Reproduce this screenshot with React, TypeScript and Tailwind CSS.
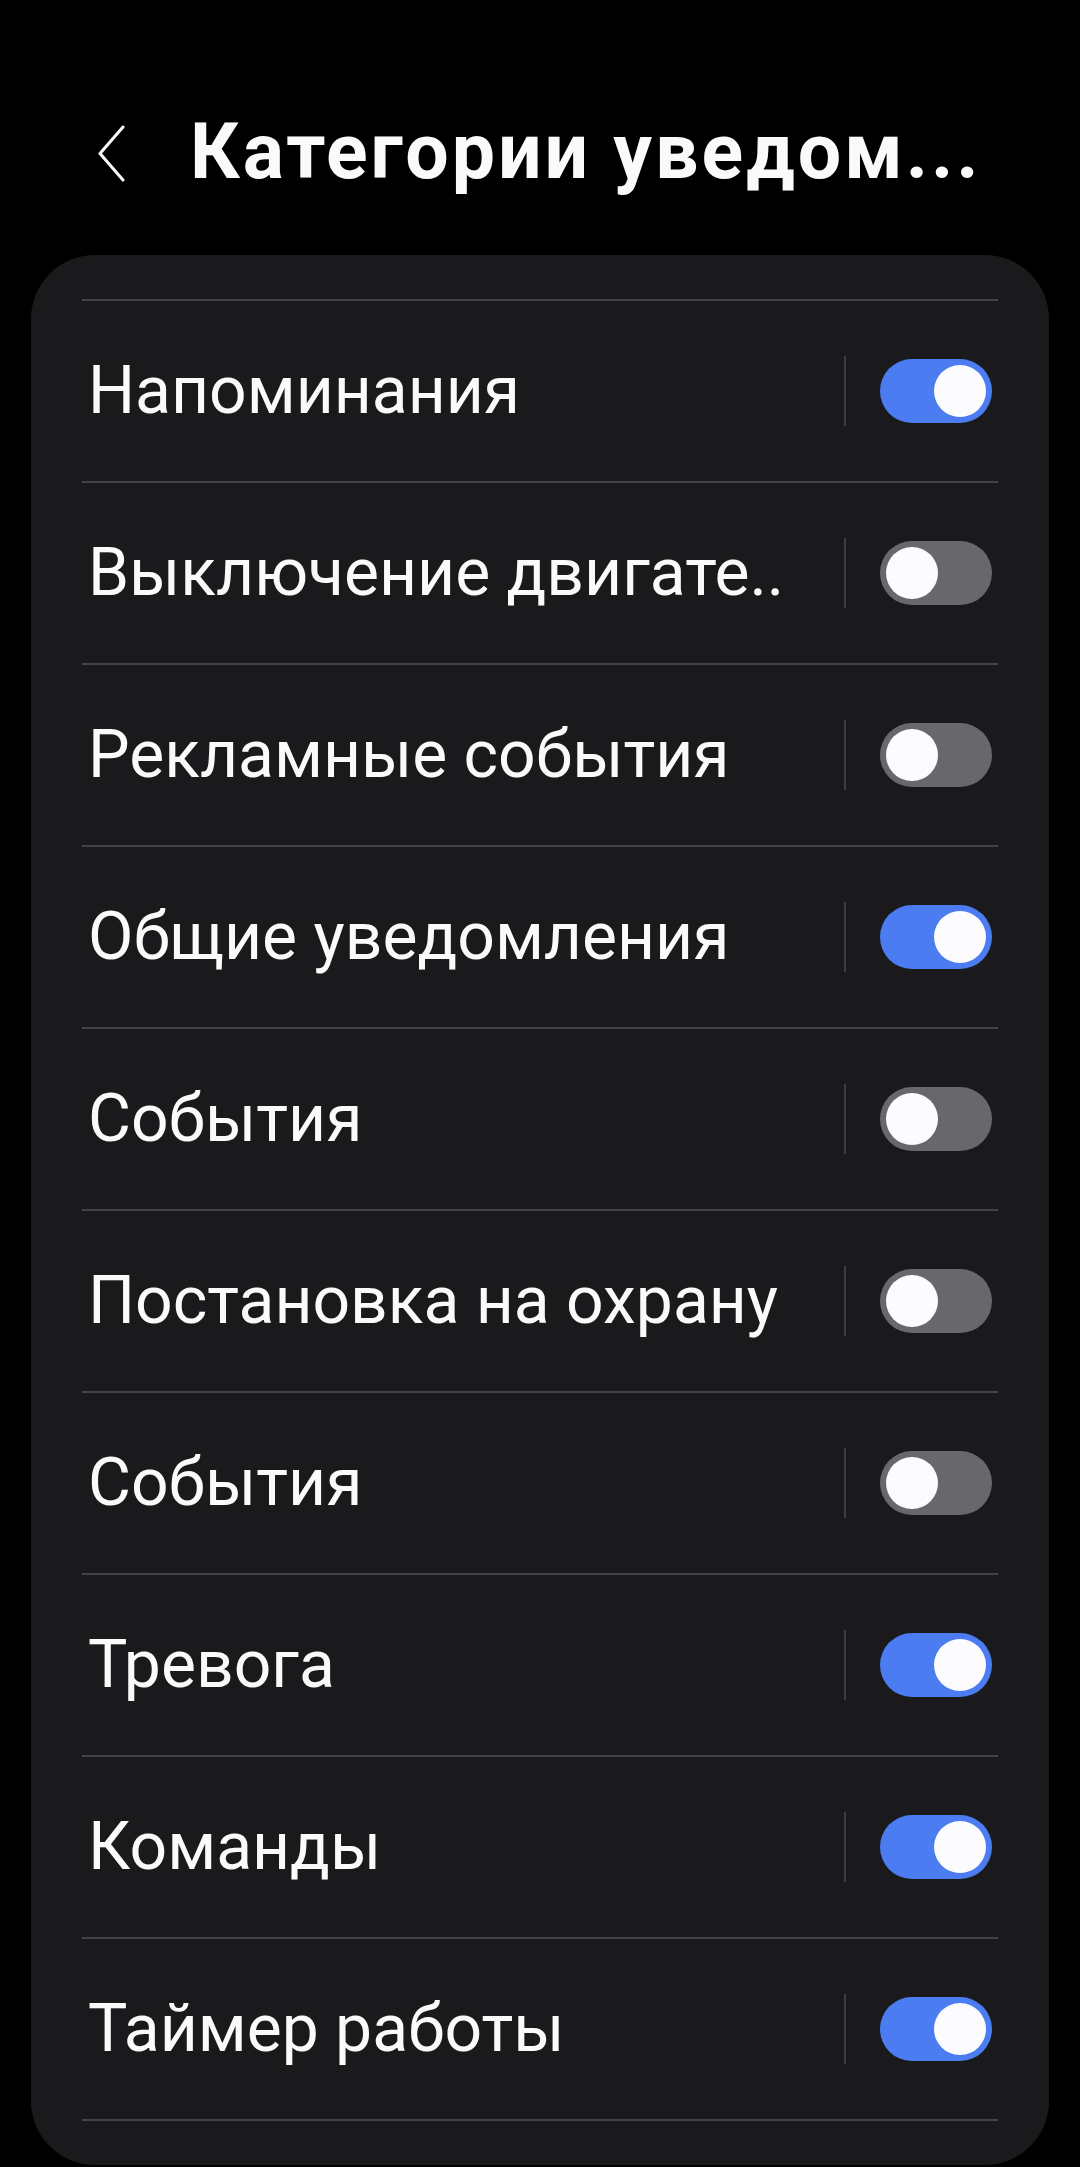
import React, { useState } from 'react';

interface Category {
  label: string;
  enabled: boolean;
}

const initialCategories: Category[] = [
  { label: 'Напоминания', enabled: true },
  { label: 'Выключение двигате..', enabled: false },
  { label: 'Рекламные события', enabled: false },
  { label: 'Общие уведомления', enabled: true },
  { label: 'События', enabled: false },
  { label: 'Постановка на охрану', enabled: false },
  { label: 'События', enabled: false },
  { label: 'Тревога', enabled: true },
  { label: 'Команды', enabled: true },
  { label: 'Таймер работы', enabled: true },
];

const Toggle: React.FC<{ on: boolean; onClick: () => void }> = ({ on, onClick }) => (
  <button
    onClick={onClick}
    aria-pressed={on}
    className={`flex h-[64px] w-[112px] shrink-0 items-center rounded-full px-[6px] ${
      on ? 'justify-end bg-[#4b7cf1]' : 'justify-start bg-[#68686c]'
    }`}
  >
    <span className="block h-[52px] w-[52px] rounded-full bg-[#fcfcff]" />
  </button>
);

const App: React.FC = () => {
  const [items, setItems] = useState(initialCategories);

  const flip = (index: number) => {
    setItems((prev) => prev.map((item, i) => (i === index ? { ...item, enabled: !item.enabled } : item)));
  };

  return (
    <div className="h-[2167px] overflow-hidden bg-black text-[#fafafa] font-['Roboto','Liberation_Sans',sans-serif]">
      <header className="flex h-[255px] items-start pl-[97px] pt-[125px]">
        <svg width="28" height="57" viewBox="0 0 28 57" fill="none" className="shrink-0">
          <path d="M26 2 L3 28.5 L26 55" stroke="#fafafa" strokeWidth="3" strokeLinecap="round" strokeLinejoin="round" />
        </svg>
        <h1 className="ml-[65px] mt-[-19px] whitespace-nowrap text-[77px] font-bold leading-[92px] tracking-[3px]">
          Категории уведом...
        </h1>
      </header>

      <div className="mx-[31px] rounded-[64px] bg-[#1a1a1c] px-[51px] py-[44px]">
        <div className="h-[2px] bg-[#434345]" />
        {items.map((item, i) => (
          <div key={i}>
            <div className="flex h-[180px] items-center pl-[6px] pr-[6px]">
              <span className="flex-1 whitespace-nowrap text-[66px] leading-none">{item.label}</span>
              <div className="h-[70px] w-[2px] bg-[#3e3e40]" />
              <div className="ml-[34px]">
                <Toggle on={item.enabled} onClick={() => flip(i)} />
              </div>
            </div>
            <div className="h-[2px] bg-[#434345]" />
          </div>
        ))}
      </div>
    </div>
  );
};

export default App;
